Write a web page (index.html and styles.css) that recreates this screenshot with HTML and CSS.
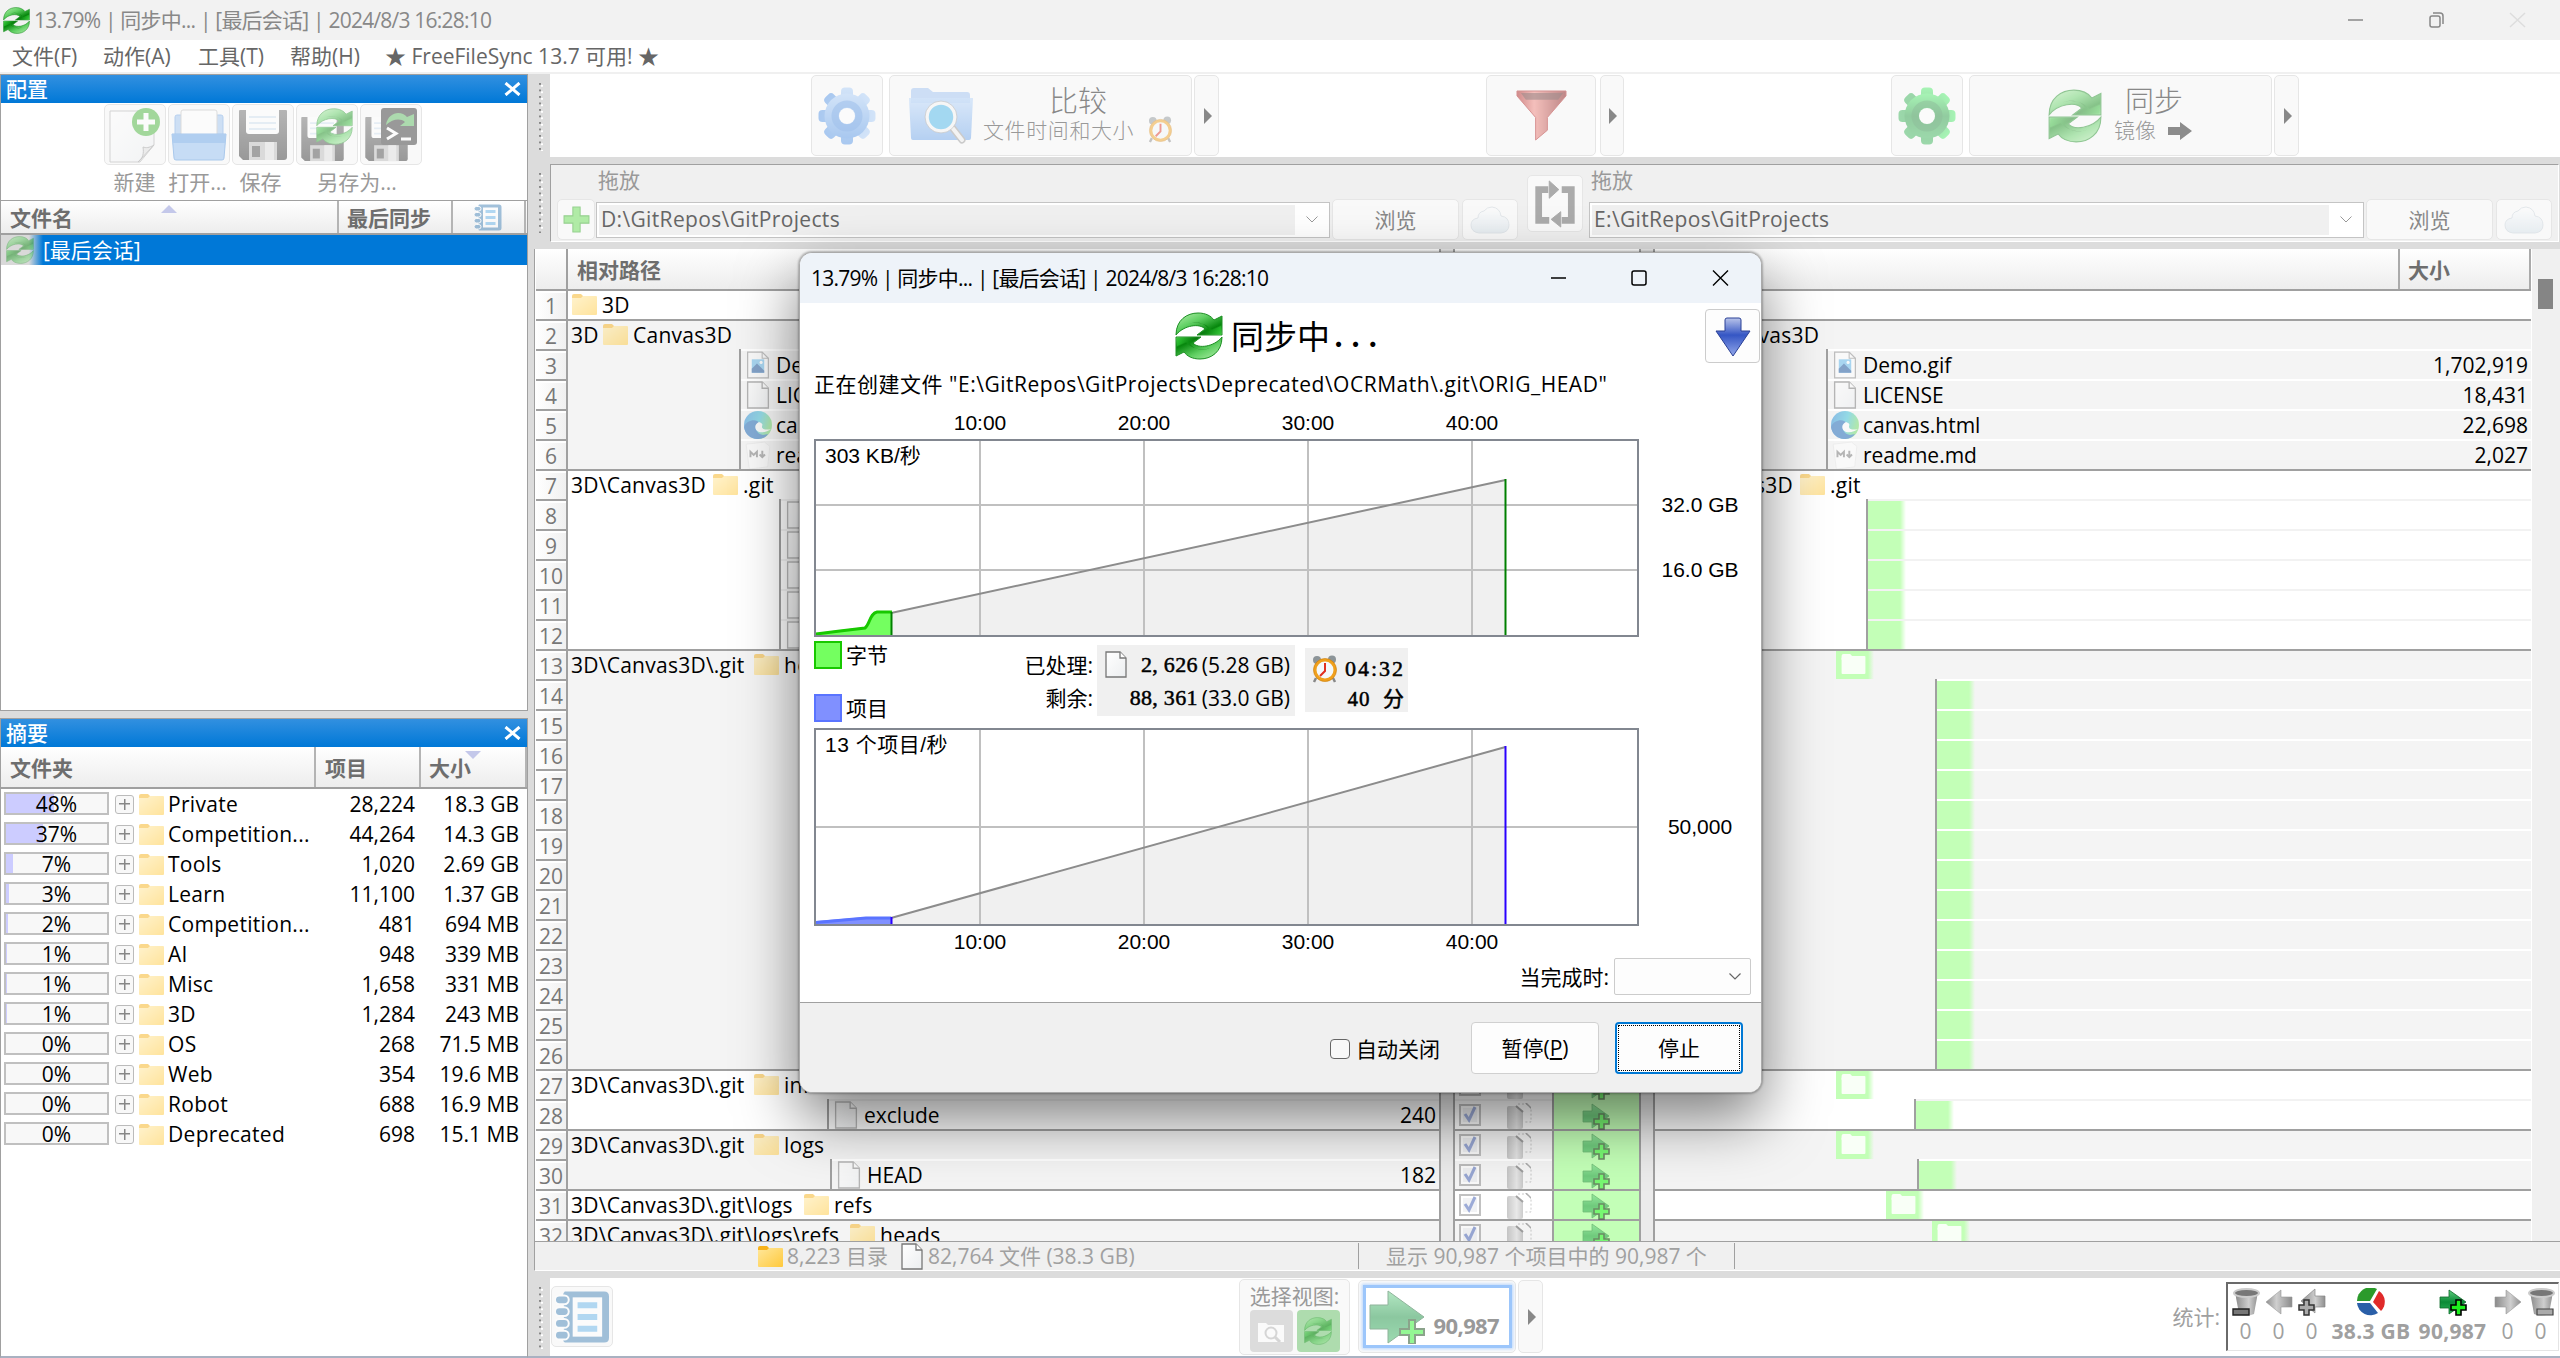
FILE: index.html
```html
<!DOCTYPE html>
<html lang="zh-CN">
<head>
<meta charset="utf-8">
<title>FreeFileSync</title>
<link rel="stylesheet" href="styles.css">
</head>
<body>
<svg class="sprite" aria-hidden="true">
  <defs>
    <linearGradient id="gSync" x1="0" y1="0" x2="1" y2="1"><stop offset="0" stop-color="#b8f0b0"/><stop offset=".4" stop-color="#5fcf62"/><stop offset=".75" stop-color="#06870c"/><stop offset="1" stop-color="#7be878"/></linearGradient>
    <linearGradient id="gSyncDark" x1="0" y1="0" x2="1" y2="0"><stop offset="0" stop-color="#123c14"/><stop offset=".6" stop-color="#0c8a12"/><stop offset="1" stop-color="#24c02a"/></linearGradient>
    <linearGradient id="gFolder" x1="0" y1="0" x2="1" y2="1"><stop offset="0" stop-color="#ffe79b"/><stop offset="1" stop-color="#ffc93c"/></linearGradient>
    <linearGradient id="gBlue" x1="0" y1="0" x2="0" y2="1"><stop offset="0" stop-color="#a9cdf8"/><stop offset="1" stop-color="#4f92e6"/></linearGradient>
    <linearGradient id="gGreen" x1="0" y1="0" x2="0" y2="1"><stop offset="0" stop-color="#4cf06a"/><stop offset=".5" stop-color="#1f9a3c"/><stop offset="1" stop-color="#35b454"/></linearGradient>
    <linearGradient id="gFloppy" x1="0" y1="0" x2="0" y2="1"><stop offset="0" stop-color="#6a6a6a"/><stop offset="1" stop-color="#2e2e2e"/></linearGradient>
    <linearGradient id="gRed" x1="0" y1="0" x2="1" y2="0"><stop offset="0" stop-color="#a31212"/><stop offset=".35" stop-color="#f08078"/><stop offset="1" stop-color="#7c0a0a"/></linearGradient>
    <linearGradient id="gDown" x1="0" y1="0" x2="0" y2="1"><stop offset="0" stop-color="#b9c4ea"/><stop offset=".45" stop-color="#3556c4"/><stop offset="1" stop-color="#93a8ea"/></linearGradient>
    <linearGradient id="gArrow" x1="0" y1="0" x2="0" y2="1"><stop offset="0" stop-color="#5fce80"/><stop offset=".5" stop-color="#0b8a36"/><stop offset="1" stop-color="#2fb35a"/></linearGradient>
    <linearGradient id="gGray" x1="0" y1="0" x2="1" y2="0"><stop offset="0" stop-color="#8a8a8a"/><stop offset=".6" stop-color="#cfcfcf"/><stop offset="1" stop-color="#8f8f8f"/></linearGradient>
    <linearGradient id="gPaper" x1="0" y1="0" x2="1" y2="1"><stop offset="0" stop-color="#fff"/><stop offset="1" stop-color="#eceef0"/></linearGradient>
    <linearGradient id="gEdge" x1="0" y1="0" x2="1" y2=".3"><stop offset="0" stop-color="#1f7fd6"/><stop offset=".6" stop-color="#35c1d8"/><stop offset="1" stop-color="#6fdc66"/></linearGradient>
    <linearGradient id="gCloud" x1="0" y1="0" x2="0" y2="1"><stop offset="0" stop-color="#fff"/><stop offset="1" stop-color="#d3dfe8"/></linearGradient>
  </defs>
  <symbol id="sync" viewBox="0 0 48 48">
    <g id="syncHalf"><path d="M1 23C1 8 12 1 23 1c8 0 13 3 16 7l8-4v19H22l8-6C25 11 9 13 1 23z" fill="url(#gSync)" stroke="#1e8f25" stroke-width="1"/><path d="M24 22.500l9-6C29 10 20 9 13 12c7-3 19-1 24 6l9-4v8z" fill="url(#gSyncDark)" opacity=".75"/></g>
    <use href="#syncHalf" transform="rotate(180 24 24)"/>
  </symbol>
  <symbol id="folder" viewBox="0 0 25 21"><path d="M0 2q0-2 2-2h7l2 2v4H0z" fill="#f7b21c"/><path d="M0 4h9l2-2h13q1 0 1 1v17q0 1-1 1H1q-1 0-1-1z" fill="url(#gFolder)"/></symbol>
  <symbol id="file" viewBox="0 0 22 27"><path d="M1 1h14l6 6v19H1z" fill="url(#gPaper)" stroke="#777" stroke-width="1.300"/><path d="M15 1v6h6" fill="#fff" stroke="#777" stroke-width="1.300"/></symbol>
  <symbol id="image" viewBox="0 0 22 27"><path d="M1 1h14l6 6v19H1z" fill="#fff" stroke="#888" stroke-width="1.200"/><path d="M15 1v6h6" fill="none" stroke="#888"/><path d="M5 8h12v13H5z" fill="#5fb8ee"/><path d="M5 21v-4l5-5 7 7v2z" fill="#14539e"/><circle cx="14" cy="11" r="1.500" fill="#fff"/></symbol>
  <symbol id="edge" viewBox="0 0 28 28"><circle cx="14" cy="14" r="14" fill="url(#gEdge)"/><path d="M0 16C2 9 13 7 15 12c-5 2-4 11 4 12l5-1c-5 8-22 7-24-7z" fill="#1464b8"/><path d="M15 11c-5 2-5 8 0 10 5 1 9-1 12-3-3 1-9 1-9-2 0-2 2-3-3-5z" fill="#fff"/></symbol>
  <symbol id="markdown" viewBox="0 0 22 26"><path d="M0 3l17-2 5 4-2 19-17 2z" fill="#fff" stroke="#ddd" stroke-width=".6"/><path d="M4 15v-5l3 3 3-3v5M15 9v6m-2.500-2.500L15 15l2.500-2.500" fill="none" stroke="#777" stroke-width="1.800"/></symbol>
  <symbol id="gearBlue" viewBox="-29 -29 58 58"><g fill="url(#gBlue)"><g id="teeth"><rect x="-6" y="-28.500" width="12" height="57" rx="4"/><rect x="-6" y="-28.500" width="12" height="57" rx="4" transform="rotate(45)"/><rect x="-6" y="-28.500" width="12" height="57" rx="4" transform="rotate(90)"/><rect x="-6" y="-28.500" width="12" height="57" rx="4" transform="rotate(135)"/></g><circle r="22.500"/></g><circle r="12" fill="none" stroke="#3f83dc" stroke-width="7" opacity=".6"/><circle r="8" fill="#fff"/></symbol>
  <symbol id="gearGreen" viewBox="-29 -29 58 58"><g fill="url(#gGreen)"><use href="#teeth"/><circle r="22.500"/></g><circle r="12" fill="none" stroke="#157a30" stroke-width="7" opacity=".5"/><circle r="8" fill="#fff"/></symbol>
  <symbol id="floppy" viewBox="0 0 50 52"><path d="M1 2q0-1 1-1h46q1 0 1 1v46q0 3-3 3H5l-4-4z" fill="url(#gFloppy)"/><path d="M8 1h33v21q0 3-3 3H11q-3 0-3-3z" fill="#fff"/><path d="M11 8h27M11 14h27M11 20h27" stroke="#cfe0ef" stroke-width="2"/><path d="M11 33h28v18H11z" fill="#b8b8b8"/><path d="M14 37h8v11h-8z" fill="#444"/><path d="M27 33h9v18h-9z" fill="#ddd"/></symbol>
  <symbol id="openFolder" viewBox="0 0 56 52"><path d="M4 8q0-2 2-2h44q2 0 2 2v20H4z" fill="#9cc2f0" stroke="#6ea4e2"/><path d="M10 3q0-2 2-2h32q2 0 2 2v24H10z" fill="#fff" stroke="#bbb"/><path d="M1 25h54l-2 24q0 2-2 2H5q-2 0-2-2z" fill="#8fbdf2" stroke="#4f91dc"/><path d="M1 25h54l-1 9H2z" fill="#5f9fe6"/></symbol>
  <symbol id="newFile" viewBox="0 0 52 56"><path d="M1 4h44v34L31 55H1z" fill="url(#gPaper)" stroke="#aaa"/><path d="M45 38c-5 3-8 3-11 2 1 6 0 12-5 15z" fill="#ddd" stroke="#999"/><circle cx="37" cy="15" r="14" fill="#41b233"/><path d="M37 6v18M28 15h18" stroke="#fff" stroke-width="5"/></symbol>
  <symbol id="plus" viewBox="0 0 26 26"><path d="M9.500 1h7v8.500H25v7h-8.500V25h-7v-8.500H1v-7h8.500z" fill="#5fdc4a" stroke="#2aa31c"/></symbol>
  <symbol id="funnel" viewBox="0 0 52 52"><path d="M1 1h50v5L32 28v13L20 51V28L1 6z" fill="url(#gRed)" stroke="#b02020"/><path d="M5 3h43l-5 7H10z" fill="#3a1212" opacity=".6"/></symbol>
  <symbol id="folderSearch" viewBox="0 0 66 56"><path d="M3 15V3q0-3 3-3h14l5 4h34q3 0 3 3v8z" fill="#9cc0f2"/><path d="M1 10h64l-2 40q0 2-2 2H5q-2 0-2-2z" fill="url(#gBlue)" opacity=".85"/><path d="M43 38l11 14" stroke="#999" stroke-width="7" stroke-linecap="round"/><path d="M43 38l11 14" stroke="#eee" stroke-width="4" stroke-linecap="round"/><circle cx="33" cy="29" r="14" fill="#45b5ea" stroke="#f4f4f4" stroke-width="3.500"/><circle cx="33" cy="29" r="16" fill="none" stroke="#999" stroke-width=".8"/></symbol>
  <symbol id="clock" viewBox="0 0 26 28"><circle cx="5" cy="5" r="4" fill="#8c9498"/><circle cx="20" cy="4.500" r="4" fill="#8c9498"/><path d="M4 23l-2 4M21 23l2 4" stroke="#888" stroke-width="2.500"/><circle cx="13" cy="15" r="10" fill="#f4f8fa" stroke="#f0a01c" stroke-width="3"/><circle cx="13" cy="15" r="11.500" fill="none" stroke="#c87a08" stroke-width=".6"/><path d="M13 8v8l-5 5" fill="none" stroke="#e03020" stroke-width="2"/></symbol>
  <symbol id="cloud" viewBox="0 0 40 28"><path d="M9 27q-8-1-8-8 0-6 7-7 0-6 6-7 3-4 8-4 8 1 9 9 8 1 8 9 0 7-8 8z" fill="url(#gCloud)" stroke="#bcc8d0" stroke-width=".8"/></symbol>
  <symbol id="swap" viewBox="0 0 42 50"><path d="M14 10H4v32h11M28 10h10v32H28" fill="none" stroke="#555" stroke-width="7"/><path d="M15 1l10 9-10 9zM27 33v16l-10-8z" fill="#555" stroke="#555"/></symbol>
  <symbol id="book" viewBox="0 0 56 54"><path d="M10 1h40q5 0 5 5v42q0 5-5 5H10q-3-2-1-6V8q-2-4 1-7z" fill="#3d7fb5"/><rect x="18" y="7" width="30" height="40" fill="#fff"/><path d="M23 15h20M23 27h20M23 39h20" stroke="#62b2ea" stroke-width="6"/><g fill="#3d7fb5" stroke="#fff" stroke-width="2"><rect x="0" y="5" width="14" height="9" rx="4.500"/><rect x="0" y="17" width="14" height="9" rx="4.500"/><rect x="0" y="29" width="14" height="9" rx="4.500"/><rect x="0" y="41" width="14" height="9" rx="4.500"/></g></symbol>
  <symbol id="arrowPlus" viewBox="0 0 56 54"><path d="M1 15h18V1l36 26-36 26V39H1z" fill="url(#gArrow)" stroke="#14602c"/><path d="M40 30h6v9h9v6h-9v9h-6v-9h-9v-6h9z" fill="#1df01d" stroke="#0b3d0b" stroke-width="2"/></symbol>
  <symbol id="arrowPlusSmall" viewBox="0 0 28 28"><path d="M1 9h9V2l17 12-17 12v-6H1z" fill="url(#gArrow)" stroke="#0c6a28" stroke-width=".8"/><path d="M17 12h5v5h5v5h-5v5h-5v-5h-5v-5h5z" fill="#1df01d" stroke="#000" stroke-width="1.600"/></symbol>
  <symbol id="arrowRight" viewBox="0 0 28 28"><path d="M1 9h11V2l15 12-15 12v-7H1z" fill="url(#gGray)" stroke="#999" stroke-width=".6"/></symbol>
  <symbol id="arrowLeftPlus" viewBox="0 0 28 28"><path d="M27 8H17V1L3 13l14 12v-6h10z" fill="url(#gGray)" stroke="#888" stroke-width=".7"/><path d="M6 12h5v5h5v5h-5v5H6v-5H1v-5h5z" fill="#aaa" stroke="#333" stroke-width="1.500"/></symbol>
  <symbol id="bin" viewBox="0 0 28 28"><path d="M3 4h23l-4 22q-8 3-15 0z" fill="url(#gGray)"/><ellipse cx="14.500" cy="5" rx="12.500" ry="4" fill="#777" stroke="#ccc" stroke-width="2"/></symbol>
  <symbol id="pie" viewBox="0 0 28 28"><path d="M13 13H0A13.500 13.500 0 0 1 20 1z" fill="#2b9a2b"/><path d="M16 14l6-11a13 13 0 0 1 2 20z" fill="#e02a2a"/><path d="M0 15h13l8 10A13.500 13.500 0 0 1 0 15z" fill="#2a5fa8"/></symbol>
  <symbol id="downArrow" viewBox="0 0 38 40"><path d="M11 3q0-2 2-2h12q2 0 2 2v11h9l-17 25L2 14h9z" fill="url(#gDown)" stroke="#2b4196"/></symbol>
  <symbol id="terminal" viewBox="0 0 36 37"><rect width="36" height="37" rx="3" fill="#2f2f2f"/><path d="M6 20l9 5.500L6 31M20 31h10" fill="none" stroke="#fff" stroke-width="3"/><path d="M5 17C7 4 20 2 26 9l7-3v12H19l5-4c-5-4-12-3-19 3z" fill="#58b85c"/></symbol>
  <symbol id="check" viewBox="0 0 22 22"><rect x="1" y="1" width="20" height="20" fill="#fff" stroke="#777" stroke-width="2"/><rect x="4" y="4" width="14" height="14" fill="#e4e6ea"/><path d="M6 10l4 6 6-13" fill="none" stroke="#2546a8" stroke-width="3"/></symbol>
  <symbol id="copy" viewBox="0 0 26 27"><path d="M12 2h8l5 4v14h-6" fill="none" stroke="#888" stroke-dasharray="2 2"/><path d="M19 1l6 6v-2l-4-4z" fill="#555"/><path d="M1 6q0-2 2-2h8l6 5v16q0 2-2 2H3q-2 0-2-2z" fill="url(#gGray)"/><path d="M10 4l7 6z" stroke="#333" stroke-width="2"/></symbol>
</svg>

<header class="titlebar">
  <svg class="title-icon"><use href="#sync"/></svg>
  <span class="title-text">13.79% | 同步中... | [最后会话] | 2024/8/3 16:28:10</span>
  <svg class="win-controls" viewBox="0 0 178 16"><path d="M0 8h15" stroke="#888" stroke-width="1.500"/><rect x="82" y="4" width="10" height="11" rx="2" fill="none" stroke="#888" stroke-width="1.500"/><path d="M85 1h7q3 0 3 3v8" fill="none" stroke="#888" stroke-width="1.500"/><path d="M162 1l15 14M177 1l-15 14" stroke="#ddd" stroke-width="1.500"/></svg>
</header>
<nav class="menubar"><span class="m1">文件(F)</span><span class="m2">动作(A)</span><span class="m3">工具(T)</span><span class="m4">帮助(H)</span><span class="m5">★ FreeFileSync 13.7 可用! ★</span></nav>

<main class="workspace">
  <aside class="sidebar">
    <section class="panel config">
      <div class="caption"><b>配置</b><svg class="x" viewBox="0 0 16 14"><path d="M1 1l14 12M15 1L1 13" stroke="#fff" stroke-width="3"/></svg></div>
      <div class="config-tools">
        <div class="tool-icons">
          <span class="btn"><svg class="faded" width="52" height="56"><use href="#newFile"/></svg></span>
          <span class="btn"><svg class="faded" width="56" height="52"><use href="#openFolder"/></svg></span>
          <span class="btn"><svg class="faded" width="50" height="52"><use href="#floppy"/></svg></span>
          <span class="btn"><span class="stack faded"><svg class="sub" width="45" height="46"><use href="#floppy"/></svg><svg class="over" width="37" height="37"><use href="#sync"/></svg></span></span>
          <span class="btn"><span class="stack faded"><svg class="sub" width="45" height="46"><use href="#floppy"/></svg><svg class="over" width="36" height="37"><use href="#terminal"/></svg></span></span>
        </div>
        <div class="tool-labels"><span>新建</span><span>打开...</span><span>保存</span><span class="wide">另存为...</span></div>
      </div>
      <div class="thead"><span class="c1">文件名<i class="tri up"></i></span><span class="c2">最后同步</span><span class="c3"><svg class="faded" width="30" height="27"><use href="#book"/></svg></span></div>
      <div class="config-row"><span class="cr-icon"><svg class="faded" width="28" height="28"><use href="#sync"/></svg></span><span>[最后会话]</span></div>
    </section>
    <section class="panel summary">
      <div class="caption"><b>摘要</b><svg class="x" viewBox="0 0 16 14"><path d="M1 1l14 12M15 1L1 13" stroke="#fff" stroke-width="3"/></svg></div>
      <div class="thead tall"><span class="s1">文件夹</span><span class="s2">项目</span><span class="s3">大小<i class="tri down"></i></span></div>
      <div id="summary-rows"></div>
    </section>
  </aside>

  <div class="content">
    <div class="strip">
      <i class="grip g-top"></i>
      <div class="toolbar">
        <div class="tb-group">
          <span class="btn tb-gear"><svg class="faded" width="58" height="58"><use href="#gearBlue"/></svg></span>
          <span class="btn tb-main"><svg class="faded fs" width="66" height="56"><use href="#folderSearch"/></svg><span class="tb-text"><span class="big">比较</span><span class="small">文件时间和大小</span></span><svg class="faded ck" width="25" height="27"><use href="#clock"/></svg></span>
          <span class="btn tb-drop"><i></i></span>
        </div>
        <div class="tb-group">
          <span class="btn tb-filter"><svg class="faded" width="53" height="51"><use href="#funnel"/></svg></span>
          <span class="btn tb-drop f"><i></i></span>
        </div>
        <div class="tb-group">
          <span class="btn tb-gear"><svg class="faded" width="58" height="58"><use href="#gearGreen"/></svg></span>
          <span class="btn tb-main sync"><svg class="faded" width="54" height="54"><use href="#sync"/></svg><span class="tb-text"><span class="big">同步</span><span class="small">镜像<svg width="25" height="18" viewBox="0 0 25 18"><path d="M0 5h12V0l12 9-12 9v-5H0z" fill="#8c8c8c"/></svg></span></span></span>
          <span class="btn tb-drop"><i></i></span>
        </div>
      </div>
    </div>
    <div class="strip second">
      <i class="grip g-mid"></i>
      <div class="folders">
        <span class="btn f-add"><svg class="faded" width="27" height="27"><use href="#plus"/></svg></span>
        <div class="pair p-left"><span class="drag">拖放</span>
          <div class="pair-row"><span class="combo"><span>D:\GitRepos\GitProjects</span><i><svg width="12" height="7" viewBox="0 0 12 7"><path d="M.5.5L6 6 11.500.5" fill="none" stroke="#999"/></svg></i></span><span class="btn browse">浏览</span><span class="btn cloud"><svg class="faded" width="40" height="28"><use href="#cloud"/></svg></span></div></div>
        <span class="btn f-swap"><svg class="faded" width="42" height="48"><use href="#swap"/></svg></span>
        <div class="pair p-right"><span class="drag r">拖放</span>
          <div class="pair-row"><span class="combo"><span>E:\GitRepos\GitProjects</span><i><svg width="12" height="7" viewBox="0 0 12 7"><path d="M.5.5L6 6 11.500.5" fill="none" stroke="#999"/></svg></i></span><span class="btn browse">浏览</span><span class="btn cloud"><svg class="faded" width="40" height="28"><use href="#cloud"/></svg></span></div></div>
      </div>
    </div>

    <div class="grids">
      <div class="pane nums"><div class="ghead"></div><div id="nums"></div></div>
      <div class="pane left"><div class="ghead"><span>相对路径</span></div><div id="left"></div></div>
      <div class="pane gap"></div>
      <div class="pane mid"><div class="ghead"></div><div id="mid"></div></div>
      <div class="pane gap"></div>
      <div class="pane right"><div class="ghead"><span class="size-head">大小</span></div><div id="right"></div></div>
      <div class="scroll"><i></i></div>
    </div>
    <div class="status">
      <div class="st1"><svg width="25" height="21"><use href="#folder"/></svg><span class="a">8,223 目录</span><svg width="22" height="27"><use href="#file"/></svg><span class="b">82,764 文件 (38.3 GB)</span></div>
      <div class="st2"><span>显示 90,987 个项目中的 90,987 个</span></div>
    </div>
    <div class="strip third">
      <i class="grip g-bot"></i>
      <div class="bottombar">
        <span class="btn b-book"><svg class="faded" width="55" height="54"><use href="#book"/></svg></span>
        <div class="btn b-view"><span>选择视图:</span><div><i class="v1"><svg width="26" height="22" viewBox="0 0 26 22"><path d="M0 3h8l2 2h16v17H0z" fill="#fafafa"/><circle cx="13" cy="13" r="5.500" fill="none" stroke="#d5d5d5" stroke-width="2"/><path d="M17 17l5 5" stroke="#d5d5d5" stroke-width="3"/></svg></i><i class="v2"><svg class="faded" width="28" height="28"><use href="#sync"/></svg></i></div></div>
        <span class="btn b-count"><span><svg class="faded" width="56" height="54"><use href="#arrowPlus"/></svg><b>90,987</b></span></span>
        <span class="btn tb-drop b"><i></i></span>
        <span class="stat-label">统计:</span>
        <div class="stats">
          <span><svg viewBox="0 0 28 28"><use href="#bin"/><path d="M1 21h16v6H1z" fill="#777" stroke="#222" stroke-width="1.400"/></svg>0</span>
          <span><svg viewBox="0 0 28 28"><use href="#arrowRight" transform="rotate(180 14 14)"/></svg>0</span>
          <span><svg><use href="#arrowLeftPlus"/></svg>0</span>
          <span class="w1"><svg><use href="#pie"/></svg><b>38.3 GB</b></span>
          <span class="w2"><svg><use href="#arrowPlusSmall"/></svg><b>90,987</b></span>
          <span><svg><use href="#arrowRight"/></svg>0</span>
          <span><svg viewBox="0 0 28 28"><use href="#bin"/><path d="M10 21h16v6H10z" fill="#aaa" stroke="#444" stroke-width="1.200"/></svg>0</span>
        </div>
      </div>
    </div>
  </div>
</main>

<section class="dialog">
  <div class="d-title"><span>13.79% | 同步中... | [最后会话] | 2024/8/3 16:28:10</span><svg width="178" height="16" viewBox="0 0 178 16"><path d="M0 8h15" stroke="#000" stroke-width="1.500"/><rect x="81" y="1" width="14" height="14" rx="2" fill="none" stroke="#000" stroke-width="1.500"/><path d="M162 .5l15 15M177 .5l-15 15" stroke="#000" stroke-width="1.400"/></svg></div>
  <div class="d-head"><svg width="48" height="48"><use href="#sync"/></svg><span>同步中<em>...</em></span><i class="d-down"><svg width="38" height="40"><use href="#downArrow"/></svg></i></div>
  <div class="d-path">正在创建文件 "E:\GitRepos\GitProjects\Deprecated\OCRMath\.git\ORIG_HEAD"</div>
  <div class="times"><span>10:00</span><span>20:00</span><span>30:00</span><span>40:00</span></div>
  <div class="chart">
    <svg width="825" height="198" viewBox="0 0 825 198">
      <rect x="1" y="1" width="823" height="196" fill="#fff"/>
      <path d="M77 174L691.500 41v156H77z" fill="#f0f0f0"/>
      <path d="M166 1v196M330 1v196M494 1v196M658 1v196M1 66h823M1 131h823" stroke="#c0c0c0" stroke-width="2"/>
      <path d="M77 174L691.500 41" stroke="#8c8c8c" stroke-width="2"/>
      <path d="M691.500 40v156" stroke="#008000" stroke-width="2"/>
      <path d="M2 196v-2l24-3 25-3c5-4 4-15 12-16h14v24z" fill="#74ff60"/>
      <path d="M2 195l24-3 25-3c5-4 5-15 12-16h15" fill="none" stroke="#18c800" stroke-width="3"/>
      <path d="M77.500 173v23" stroke="#008000" stroke-width="2"/>
      <rect x="1" y="1" width="823" height="196" fill="none" stroke="#828790" stroke-width="2"/>
    </svg>
    <span class="rate">303 KB/秒</span>
    <div class="ylabels"><span>32.0 GB</span><span>16.0 GB</span></div>
  </div>
  <div class="d-mid">
    <div class="legend"><span><i class="lg"></i>字节</span><span><i class="lb"></i>项目</span></div>
    <div class="mlabels"><span>已处理:</span><span>剩余:</span></div>
    <div class="counts"><span><svg width="22" height="27"><use href="#file"/></svg><b>2, 626</b><s>(5.28 GB)</s></span><span><b>88, 361</b><s>(33.0 GB)</s></span></div>
    <div class="clock"><span><svg width="26" height="28"><use href="#clock"/></svg><b>04:32</b></span><span><b>40&nbsp; 分</b></span></div>
  </div>
  <div class="chart second-chart">
    <svg width="825" height="198" viewBox="0 0 825 198">
      <rect x="1" y="1" width="823" height="196" fill="#fff"/>
      <path d="M77 190L691.500 19v178H77z" fill="#f0f0f0"/>
      <path d="M166 1v196M330 1v196M494 1v196M658 1v196M1 99h823" stroke="#c0c0c0" stroke-width="2"/>
      <path d="M77 190L691.500 19" stroke="#8c8c8c" stroke-width="2"/>
      <path d="M691.500 18v178" stroke="#2a00ff" stroke-width="2"/>
      <path d="M2 196v-3l50-4h25v7z" fill="#8090ff"/>
      <path d="M2 194.500l50-4.500h25" fill="none" stroke="#5a74ff" stroke-width="3"/>
      <path d="M77.500 189v7" stroke="#2a00ff" stroke-width="2"/>
      <rect x="1" y="1" width="823" height="196" fill="none" stroke="#828790" stroke-width="2"/>
    </svg>
    <span class="rate r2">13 个项目/秒</span>
    <div class="ylabels one"><span>50,000</span></div>
  </div>
  <div class="times lower"><span>10:00</span><span>20:00</span><span>30:00</span><span>40:00</span></div>
  <div class="d-when"><span>当完成时:</span><i><svg width="12" height="7" viewBox="0 0 12 7"><path d="M.5.5L6 6 11.500.5" fill="none" stroke="#666" stroke-width="1.200"/></svg></i></div>
  <footer class="d-foot"><i class="box"></i><span class="auto">自动关闭</span><span class="dbtn">暂停(<u>P</u>)</span><span class="dbtn def">停止</span></footer>
</section>
<script src="app.js"></script>
</body>
</html>
```
FILE: styles.css
```css
* { box-sizing: border-box; }
body {
  margin: 0; width: 2560px; height: 1358px; overflow: hidden; position: relative;
  display: flex; flex-direction: column; background: #fff;
  font: 21px/28px "Open Sans", "Noto Sans CJK SC", sans-serif; color: #000;
}
i, em { font-style: normal; }
s { text-decoration: none; }
svg { display: block; flex: none; }
span { white-space: pre; }
.sprite { position: absolute; width: 0; height: 0; }
.faded { opacity: .47; }

.titlebar { height: 40px; background: #f2f2f2; display: flex; align-items: center; padding: 0 34px 0 3px; color: #888; }
.title-icon { width: 27px; height: 27px; margin-right: 4px; }
.title-text { letter-spacing: -.78px; }
.win-controls { width: 178px; height: 16px; margin-left: auto; }
.menubar { height: 34px; border-bottom: 2px solid #f0f0f0; display: flex; align-items: center; color: #666; }
.menubar span { flex: none; }
.m1 { width: 91px; margin-left: 12px; }
.m2 { width: 95px; }
.m3 { width: 92px; }
.m4 { width: 95px; }

.workspace { height: 1284px; display: flex; background: #dcdcdc; }
.sidebar { width: 528px; display: flex; flex-direction: column; gap: 7px; }
.panel { border: 1px solid #a0a0a0; background: #fff; }
.config { height: 637px; }
.summary { flex: 1; border-bottom: 2px solid #a9b1c1; }
.caption { height: 28px; background: linear-gradient(#3290e0, #0078d7); display: flex; align-items: center; justify-content: space-between; color: #fff; padding: 0 6px 0 5px; font-size: 21px; }
.caption b { font-weight: 500; }
.x { width: 17px; height: 14px; }
.btn { display: flex; align-items: center; justify-content: center; background: #f9f9f9; border: 1px solid #e6e6e6; border-radius: 5px; flex: none; }
.config-tools { height: 97px; }
.tool-icons { display: flex; gap: 2px; padding: 1px 0 0 103px; }
.tool-icons .btn { width: 62px; height: 61px; }
.stack { position: relative; width: 60px; height: 59px; }
.stack .sub { margin: 11px 0 0 3px; }
.stack .over { position: absolute; right: 4px; top: 3px; }
.tool-labels { display: flex; color: #999; margin-top: 3px; padding-left: 102px; }
.tool-labels span { width: 63px; text-align: center; }
.tool-labels .wide { width: 130px; }
.thead { height: 35px; display: flex; border-top: 1px solid #a0a0a0; border-bottom: 2px solid #a0a0a0; background: linear-gradient(#fff, #ededed); color: #6e6e6e; font-weight: 700; }
.thead span { position: relative; display: flex; align-items: center; border-right: 2px solid #b4b4b4; padding-left: 9px; padding-top: 1px; }
.thead .c1 { width: 338px; }
.thead .c2 { width: 114px; padding-left: 8px; }
.thead .c3 { width: 73px; padding-left: 20px; }
.thead.tall { height: 42px; border-top: 0; }
.thead .s1 { width: 315px; }
.thead .s2 { width: 105px; }
.thead .s3 { width: 106px; padding-left: 8px; }
.tri { position: absolute; border: 8px solid transparent; }
.tri.up { border-top: 0; border-bottom: 8px solid #c4c8ea; left: 160px; top: 4px; }
.tri.down { border-bottom: 0; border-top: 8px solid #c4c8ea; left: 44px; top: 4px; }
.config-row { height: 30px; display: flex; align-items: center; background: #0078d7; color: #fff; }
.cr-icon { width: 42px; height: 30px; background: linear-gradient(90deg, #d9d9d9 28px, #0078d7); padding: 1px 0 0 5px; }
.srow { height: 30px; display: flex; align-items: center; padding-left: 3px; }
.srow svg { opacity: .5; }
.bar { width: 105px; height: 23px; border: 2px solid #c0c0c0; text-align: center; line-height: 20px; flex: none; margin: -1px 6px 0 0; background: #f8f8f8; position: relative; }
.bar i { position: absolute; left: 0; top: 0; bottom: 0; background: #ccccff; }
.bar span { position: relative; }
.expand { width: 19px; height: 19px; border: 1.500px solid #bbb; border-radius: 3px; flex: none; background: linear-gradient(90deg, #888, #888) center/11px 1.500px no-repeat, linear-gradient(#888, #888) center/1.500px 11px no-repeat, #f8f8f8; margin-right: 5px; }
.srow .nm { width: 150px; margin-left: 4px; letter-spacing: .3px; }
.srow .ct { width: 97px; text-align: right; }
.srow .sz { width: 104px; text-align: right; }

.content { width: 2032px; display: flex; flex-direction: column; }
.strip { display: flex; height: 83px; }
.grip { width: 5px; flex: none; background: radial-gradient(circle at 1px 1px, #888 1px, transparent 1.200px) 0 0/5px 6.500px, radial-gradient(circle at 3px 3px, #fff 1px, transparent 1.200px) 0 0/5px 6.500px; margin: 9px 6px 0 11px; height: 68px; }
.g-mid { height: 60px; }
.g-bot { height: 62px; }
.toolbar { width: 2010px; background: #fff; display: flex; gap: 267px; padding: 1px 0 0 261px; }
.tb-group { display: flex; }
.tb-group .btn { height: 81px; }
.tb-gear { width: 72px; margin-right: 6px; }
.tb-main { width: 303px; margin-right: 2px; position: relative; }
.tb-drop { width: 25px; }
.tb-drop.f { margin-left: 4px; width: 24px; }
.tb-drop i { border: 8px solid transparent; border-left-color: #888; border-right: 0; margin-left: 2px; }
.tb-filter { width: 110px; }
.tb-main:not(.sync) { justify-content: flex-start; padding-left: 18px; }
.tb-text { display: flex; flex-direction: column; font-family: "Noto Sans CJK SC", sans-serif; color: #999; padding-bottom: 10px; }
.big { font-size: 29px; line-height: 36px; text-align: center; color: #888; font-weight: 300; }
.small { font-size: 21px; line-height: 24px; font-weight: 300; display: flex; align-items: center; gap: 12px; }
.small svg { margin-top: 5px; }
.tb-main:not(.sync) .tb-text { width: 152px; margin-left: 9px; }
.tb-main:not(.sync) .big { padding-left: 38px; }
.tb-main:not(.sync) .small { letter-spacing: .6px; }
.ck { margin: 28px 0 0 13px; }
.sync { gap: 12px; padding-left: 0; }
.sync .big { text-align: left; padding-left: 11px; }

.second { margin-top: 7px; height: 78px; }
.folders { width: 2009px; background: #f0f0f0; border: 1px solid #fff; border-top-color: #a0a0a0; border-left-color: #a0a0a0; display: flex; }
.f-add { width: 38px; height: 41px; margin: 34px 1px 0 6px; }
.pair { display: flex; flex-direction: column; }
.drag { height: 34px; padding: 1px 0 0 2px; color: #999; }
.drag.r { padding-left: 2px; }
.pair-row { display: flex; align-items: center; height: 41px; }
.combo { height: 36px; border: 1px solid #c4c4c4; background: #f0f0f0; box-shadow: inset 0 0 0 2px #fff; color: #666; display: flex; align-items: center; justify-content: space-between; padding-left: 4px; margin-right: 2px; }
.combo span { letter-spacing: .35px; margin-top: -2px; }
.combo i { width: 34px; height: 34px; background: #fff; display: flex; align-items: center; justify-content: center; }
.p-left { width: 924px; }
.p-left .drag { padding-left: 2px; }
.p-left .combo { width: 734px; }
.p-right .combo { width: 775px; }
.browse { width: 127px; height: 41px; color: #888; margin-right: 3px; }
.cloud { width: 56px; height: 41px; }
.f-swap { width: 56px; height: 57px; margin: 10px 6px 0 7px; }

.grids { height: 993px; margin: 7px 0 0 6px; display: flex; overflow: hidden; background: #f0f0f0; border-left: 1px solid #a0a0a0; border-bottom: 1px solid #a0a0a0; }
.pane { flex: none; }
.nums { width: 33px; padding-left: 1px; background: #fff; border-right: 2px solid #a0a0a0; }
.left { width: 873px; border-right: 2px solid #a0a0a0; }
.gap { width: 12px; background: #ebebeb; }
.mid { width: 188px; border-left: 2px solid #a0a0a0; border-right: 2px solid #a0a0a0; }
.right { width: 878px; border-left: 2px solid #a0a0a0; }
.ghead { height: 42px; border-bottom: 2px solid #a0a0a0; background: linear-gradient(#fff, #ededed); color: #6e6e6e; font-weight: 700; display: flex; align-items: center; padding: 2px 0 0 9px; }
.right .ghead { padding: 0; }
.size-head { margin-left: 743px; width: 134px; height: 40px; border-left: 2px solid #aaa; border-right: 2px solid #aaa; padding-left: 8px; line-height: 43px; }
.scroll { flex: 1; padding: 30px 0 0 6px; border-left: 1px solid #fff; }
.scroll i { display: block; width: 15px; height: 30px; background: #858585; }
.num { height: 30px; border-bottom: 2px solid #a0a0a0; text-align: center; color: #777; line-height: 31px; background: linear-gradient(90deg, #fff, #f0f0f0); box-shadow: inset 0 2px #fff; }
.group { border-bottom: 2px solid #a0a0a0; background: #fff; }
.group.alt { background: #f4f4f4; }
.frow { height: 28px; display: flex; align-items: center; padding-left: 3px; }
.frow span { padding-top: 1px; line-height: 27px; letter-spacing: .25px; }
.group.multi .frow { height: 30px; padding-bottom: 2px; }
.frow .path { flex: none; overflow: visible; }
.frow svg { opacity: .5; margin: -1px 5px 0 1px; }
.missing { background: linear-gradient(90deg, #c3ffb7 32px, transparent); width: 38px; height: 28px; padding: 4px 0 0 5px; margin-left: -4px; }
.missing svg { filter: grayscale(1) brightness(1.400); opacity: .9; margin-left: 0; }
.files { margin-top: -2px; border-left: 2px solid #a0a0a0; }
.fi { height: 30px; border-top: 2px solid #f2f2f2; display: flex; align-items: center; padding: 0 3px 0 3px; }
.alt .fi { border-top-color: #fff; }
.fi span { padding-top: 1px; line-height: 27px; }
.fi svg { opacity: .5; width: 28px; height: 28px; margin-right: 4px; }
.fi .sz { margin-left: auto; }
.fi.none { background: linear-gradient(90deg, #c3ffb7 32px, transparent 38px); background-origin: padding-box; background-clip: padding-box; }
.mrow { height: 30px; display: flex; }
.mrow .cell { width: 97px; display: flex; align-items: center; padding-left: 4px; gap: 25px; border-bottom: 2px solid #f2f2f2; flex: none; }
.alt .mrow .cell { border-color: #fff; }
.mrow .act { flex: 1; border-left: 2px solid #a0a0a0; background: #c3ffb7; padding: 1px 0 0 28px; }
.mrow svg { opacity: .45; }
.mrow:last-child { height: 28px; }
.mrow:last-child .cell { border-bottom: 0; }

.status { height: 29px; margin-left: 6px; background: #f0f0f0; border-bottom: 1px solid #fff; border-left: 1px solid #a0a0a0; display: flex; align-items: center; color: #a0a0a0; }
.st1 { width: 824px; height: 26px; border-right: 1px solid #a0a0a0; display: flex; align-items: center; padding-left: 223px; }
.st1 .a { width: 118px; padding-left: 4px; }
.st1 .b { padding-left: 5px; }
.st2 { width: 376px; height: 26px; border-right: 1px solid #a0a0a0; line-height: 26px; text-align: center; }
.third { margin-top: 7px; height: 80px; border-bottom: 2px solid #a9b1c1; }
.bottombar { width: 2010px; background: #fff; display: flex; }
.b-book { width: 62px; height: 61px; margin: 8px 0 0 1px; }
.b-view { width: 111px; height: 76px; margin: 1px 8px 0 626px; flex-direction: column; color: #999; }
.b-view div { display: flex; gap: 4px; }
.b-view i { width: 43px; height: 42px; border-radius: 4px; display: flex; align-items: center; justify-content: center; }
.v1 { background: #dcdcdc; }
.v2 { background: #aedcae; }
.b-count { width: 158px; height: 73px; margin-top: 2px; }
.b-count span { width: 149px; height: 63px; border: 3px solid #9cc6fb; background: #fff; box-shadow: 0 0 3px 1px #b8d6fc; display: flex; align-items: flex-end; padding: 0 0 1px 3px; }
.b-count b { color: #999; margin: 0 0 5px 9px; font-size: 22px; letter-spacing: -.6px; }
.tb-drop.b { height: 73px; margin: 2px 0 0 2px; }
.stat-label { margin: 25px 6px 0 auto; color: #a0a0a0; }
.stats { width: 333px; height: 69px; margin: 4px 1px 0 0; border: 1px solid #e4e4e4; border-top: 2px solid #6a6a6a; border-left: 2px solid #6a6a6a; display: flex; padding: 4px 0 0 1px; color: #a0a0a0; }
.stats span { width: 33px; display: flex; flex-direction: column; align-items: center; line-height: 31px; flex: none; }
.stats svg { width: 28px; height: 28px; }
.stats .w1 { width: 86px; }
.stats .w2 { width: 77px; }
.stats b { font-size: 21px; letter-spacing: .3px; }

.dialog { position: absolute; left: 799px; top: 252px; width: 963px; height: 841px; background: #fff; border: 1px solid #aaa; border-radius: 13px; overflow: hidden; display: flex; flex-direction: column; box-shadow: 0 0 2px 1px rgba(0,0,0,.25), 0 26px 60px rgba(0,0,0,.5); }
.d-title { height: 50px; background: #eef3f9; display: flex; align-items: center; justify-content: space-between; padding: 0 32px 0 11px; flex: none; }
.d-title span { letter-spacing: -.78px; }
.d-head { height: 66px; display: flex; align-items: center; padding-left: 375px; flex: none; position: relative; }
.d-head span { font: 400 33px/48px "Noto Sans CJK SC", sans-serif; margin: -2px 0 0 8px; display: flex; }
.d-head em { letter-spacing: 8px; margin-left: 4px; font-weight: 700; font-size: 28px; }
.d-down { position: absolute; right: 1px; top: 6px; width: 55px; height: 54px; border: 1px solid #ccc; border-radius: 4px; padding: 7px 0 0 8px; background: #fdfdfd; }
.d-path { height: 31px; padding: 1px 0 0 14px; white-space: pre; flex: none; letter-spacing: .52px; }
.times { display: flex; padding-left: 98px; height: 39px; font-family: "Liberation Sans", sans-serif; line-height: 45px; flex: none; }
.times span { width: 164px; text-align: center; }
.chart { display: flex; padding-left: 14px; height: 198px; position: relative; font-family: "Liberation Sans", "Noto Sans CJK SC", sans-serif; flex: none; }
.rate { position: absolute; left: 25px; top: 3px; }
.r2 { letter-spacing: .5px; }
.ylabels { width: 123px; display: flex; flex-direction: column; text-align: center; padding-top: 52px; gap: 37px; }
.ylabels.one { padding-top: 85px; }
.d-mid { height: 91px; display: flex; flex: none; }
.legend { width: 189px; padding: 4px 0 0 14px; display: flex; flex-direction: column; gap: 25px; }
.legend span { display: flex; gap: 4px; }
.legend i { width: 28px; height: 28px; }
.lg { background: #74ff60; border: 2px solid #18c800; }
.lb { background: #8090ff; border: 2px solid #5a74ff; }
.mlabels { width: 104px; text-align: right; padding-top: 14px; display: flex; flex-direction: column; gap: 5px; margin-right: 4px; }
.counts { width: 198px; height: 71px; margin: 8px 10px 0 0; background: #f0f0f0; padding: 6px 5px 0 8px; display: flex; flex-direction: column; gap: 6px; }
.counts span, .clock span { display: flex; justify-content: flex-end; align-items: center; height: 27px; }
.counts svg { margin-right: auto; }
.counts b, .clock b { font: 400 22px/27px "Liberation Serif", "Noto Sans CJK SC", serif; -webkit-text-stroke: .5px #000; letter-spacing: .3px; }
.counts s { margin-left: 4px; }
.clock { width: 103px; height: 64px; margin-top: 11px; background: #f0f0f0; padding: 7px 5px 0 7px; display: flex; flex-direction: column; gap: 4px; }
.clock svg { margin-right: auto; }
.clock b { letter-spacing: 2px; margin-right: -2px; }
.clock span:last-child b { letter-spacing: 1px; font-size: 21px; }
.lower { height: 30px; line-height: 32px; }
.d-when { height: 44px; display: flex; justify-content: flex-end; padding: 0 10px 3px 0; align-items: center; flex: none; gap: 5px; }
.d-when i { width: 137px; height: 37px; border: 1px solid #ccc; border-radius: 2px; display: flex; align-items: center; justify-content: flex-end; padding-right: 9px; background: #fdfdfd; }
.d-foot { flex: 1; border-top: 1px solid #a0a0a0; background: #f0f0f0; display: flex; padding: 19px 18px 0 0; justify-content: flex-end; margin-top: 2px; }
.box { width: 20px; height: 20px; border: 1.500px solid #666; border-radius: 4px; background: #f8f8f8; margin: 17px 6px 0 0; }
.auto { margin: 13px 31px 0 0; }
.dbtn { width: 128px; height: 52px; border: 1px solid #d0d0d0; border-radius: 4px; background: #fdfdfd; line-height: 51px; text-align: center; }
.dbtn.def { margin-left: 16px; border: 2px solid #0078d4; outline: 1px dotted #000; outline-offset: -4px; line-height: 49px; }
```
FILE: app.js
```js
const icon = (id, w, h) => `<svg width="${w}" height="${h}"><use href="#${id}"/></svg>`;
const $ = id => document.getElementById(id);

const summary = [
  [48, 'Private', '28,224', '18.3 GB'], [37, 'Competition...', '44,264', '14.3 GB'],
  [7, 'Tools', '1,020', '2.69 GB'], [3, 'Learn', '11,100', '1.37 GB'],
  [2, 'Competition...', '481', '694 MB'], [1, 'AI', '948', '339 MB'],
  [1, 'Misc', '1,658', '331 MB'], [1, '3D', '1,284', '243 MB'],
  [0, 'OS', '268', '71.5 MB'], [0, 'Web', '354', '19.6 MB'],
  [0, 'Robot', '688', '16.9 MB'], [0, 'Deprecated', '698', '15.1 MB']
];
$('summary-rows').innerHTML = summary.map(([p, n, c, s]) =>
  `<div class="srow"><div class="bar"><i style="width:${p}%"></i><span>${p}%</span></div><i class="expand"></i>${icon('folder', 25, 21)}<span class="nm">${n}</span><span class="ct">${c}</span><span class="sz">${s}</span></div>`).join('');

const blank = n => Array.from({ length: n }, () => ['file', '', '']);
/* path: parent path, pw: width of its column, indent: start of the item list, right: what the target side holds */
const groups = [
  { path: '', pw: 0, name: '3D', files: [], right: 'same' },
  { path: '3D', pw: 31, name: 'Canvas3D', indent: 171, right: 'same', files: [['image', 'Demo.gif', '1,702,919'], ['file', 'LICENSE', '18,431'], ['edge', 'canvas.html', '22,698'], ['markdown', 'readme.md', '2,027']] },
  { path: '3D\\Canvas3D', pw: 141, name: '.git', indent: 211, right: 'folder', files: blank(5) },
  { path: '3D\\Canvas3D\\.git', pw: 182, name: 'hooks', indent: 280, right: 'none', files: blank(13) },
  { path: '3D\\Canvas3D\\.git', pw: 182, name: 'info', indent: 259, right: 'none', files: [['file', 'exclude', '240']] },
  { path: '3D\\Canvas3D\\.git', pw: 182, name: 'logs', indent: 262, right: 'none', files: [['file', 'HEAD', '182']] },
  { path: '3D\\Canvas3D\\.git\\logs', pw: 232, name: 'refs', files: [], right: 'none' },
  { path: '3D\\Canvas3D\\.git\\logs\\refs', pw: 278, name: 'heads', files: [], right: 'none' }
];

const groupHtml = (g, i, side) => {
  const missing = side === 'right' && g.right === 'none';
  const noFiles = side === 'right' && g.right !== 'same';
  const head = missing
    ? `<span class="path" style="width:${g.pw}px"></span><div class="missing">${icon('folder', 25, 20)}</div>`
    : `<span class="path" style="width:${g.pw}px">${g.path}</span>${icon('folder', 25, 21)}<span>${g.name}</span>`;
  const files = g.files.map(([t, n, s]) => noFiles
    ? '<div class="fi none"></div>'
    : `<div class="fi">${icon(t, 28, 27)}<span>${n}</span><span class="sz">${s}</span></div>`).join('');
  return `<div class="group${i % 2 ? ' alt' : ''}${g.files.length ? ' multi' : ''}"><div class="frow">${head}</div>${files ? `<div class="files" style="margin-left:${g.indent}px">${files}</div>` : ''}</div>`;
};
$('left').innerHTML = groups.map((g, i) => groupHtml(g, i, 'left')).join('');
$('right').innerHTML = groups.map((g, i) => groupHtml(g, i, 'right')).join('');

const midRow = `<div class="mrow"><div class="cell">${icon('check', 22, 22)}${icon('copy', 26, 27)}</div><div class="act">${icon('arrowPlusSmall', 28, 28)}</div></div>`;
$('mid').innerHTML = groups.map((g, i) => `<div class="group${i % 2 ? ' alt' : ''}">${midRow.repeat(g.files.length + 1)}</div>`).join('');
$('nums').innerHTML = Array.from({ length: 32 }, (_, i) => `<div class="num">${i + 1}</div>`).join('');
```
